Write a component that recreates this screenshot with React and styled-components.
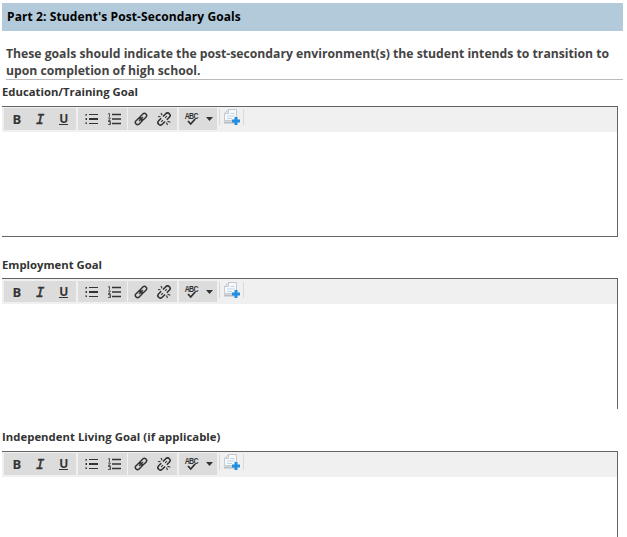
import React from "react";
import styled, { createGlobalStyle } from "styled-components";

const GlobalStyle = createGlobalStyle`
  body {
    margin: 0;
    background-color: #ffffff;
    font-family: "Open Sans", sans-serif;
    overflow: hidden;
  }
`;

const Page = styled.div`
  width: 621px;
  height: 534px;
  padding: 3px 0 0 2px;
  overflow: hidden;
`;

const Header = styled.h1`
  box-sizing: border-box;
  height: 28px;
  margin: 0;
  padding-left: 5px;
  background-color: #b2cad9;
  color: #000000;
  font-size: 12px;
  font-weight: 700;
  letter-spacing: 0.1px;
  line-height: 27px;
`;

const Intro = styled.p`
  box-sizing: border-box;
  height: 49px;
  margin: 0 0 0 4px;
  padding-top: 14px;
  border-bottom: 1px solid #bbbbbb;
  color: #444444;
  font-size: 12.2px;
  font-weight: 700;
  line-height: 17px;
  white-space: nowrap;
`;

const Label = styled.label`
  display: block;
  height: ${(props) => props.$height}px;
  margin-top: ${(props) => props.$gap}px;
  color: #333333;
  font-size: 11.3px;
  font-weight: 700;
  letter-spacing: ${(props) => props.$spacing || 0}px;
  line-height: 16px;
  white-space: nowrap;
`;

const Editor = styled.div`
  box-sizing: border-box;
  width: 616px;
  height: ${(props) => props.$height}px;
  border-top: 1px solid #646464;
  border-right: 1px solid #646464;
  border-bottom: ${(props) => (props.$closed ? "1px solid #646464" : "none")};
`;

const Toolbar = styled.div`
  box-sizing: border-box;
  display: flex;
  align-items: flex-start;
  height: 25px;
  padding: ${(props) => props.$top}px 0 0 2px;
  background-color: #f0f0f0;
`;

const Group = styled.div`
  box-sizing: border-box;
  display: flex;
  width: ${(props) => props.$width}px;
  height: ${(props) => (props.$short ? 21 : 22)}px;
  margin-right: ${(props) => props.$gap || 0}px;
  padding-left: 1px;
  background-color: #dcdcdc;
`;

const Button = styled.button`
  display: flex;
  flex: none;
  align-items: center;
  justify-content: center;
  width: ${(props) => props.$width || 23.5}px;
  height: 22px;
  margin: 0;
  padding: 0;
  border: none;
  background-color: transparent;
  color: #333333;
  font-family: "Open Sans", sans-serif;
  font-size: 13px;
  font-weight: 700;
  line-height: 22px;

  svg {
    display: block;
    flex: none;
  }
`;

const Italic = styled.span`
  font-family: "DejaVu Sans Mono", monospace;
  font-size: 14px;
  font-style: italic;
  font-weight: 400;
  -webkit-text-stroke: 0.4px #333333;
`;

const Underline = styled.span`
  height: 10px;
  border-bottom: 1px solid #333333;
  font-size: 12px;
  font-weight: 700;
  line-height: 9px;
`;

const Spelling = styled.span`
  display: flex;
  flex-direction: column;
  align-items: center;
  width: 14px;
  margin-left: -1px;
`;

const SpellingLetters = styled.span`
  font-family: "Liberation Sans", sans-serif;
  font-size: 7px;
  font-weight: 700;
  letter-spacing: -0.7px;
  line-height: 6px;
  transform: scaleY(1.25);
`;

const AddButton = styled(Button)`
  box-sizing: border-box;
  width: 25px;
  height: 16px;
  margin-top: 1px;
  border-left: 1px solid #dadada;
  border-right: 1px solid #dadada;
`;

const BulletIcon = () => (
  <svg width="13" height="12" fill="#333333" shapeRendering="crispEdges">
    <path d="M1 1h1v1H1zM1 5h1v2H1zM1 10h1v1H1zM4 1h9v1H4zM4 5h9v2H4zM4 10h9v1H4z" />
    <path d="M0 1h2v2H0zM0 5h2v2H0zM0 9h2v2H0z" fillOpacity=".45" />
  </svg>
);

const NumberIcon = () => (
  <svg width="13" height="12" fill="none" stroke="#333333">
    <path d="M4 1.5h9M4 6h9M4 10.5h9" strokeWidth="1.5" />
    <path d="M0 1l1.5-.5V4M0 5h2.5L.5 7.5h2M0 8.5h2.5v3H0M1 10h1.5" strokeWidth=".8" />
  </svg>
);

const LinkIcon = () => (
  <svg width="14" height="14" fill="none" stroke="#333333" strokeWidth="1.5">
    <g transform="rotate(-45 7 7)">
      <rect x="0" y="4.8" width="7.8" height="4.4" rx="2.2" />
      <rect x="6.2" y="4.8" width="7.8" height="4.4" rx="2.2" />
      <path d="M4 7h6" strokeWidth="1.1" />
    </g>
  </svg>
);

const UnlinkIcon = () => (
  <svg width="14" height="14" fill="none" stroke="#333333" strokeWidth="1.6">
    <g transform="rotate(-45 7 7)">
      <path d="M5.5 4.5H2a2.5 2.5 0 0 0 0 5h4M8 4.5H12a2.5 2.5 0 0 1 0 5H8.5" />
      <path d="M3 7h2.5M8.5 7H11" strokeWidth="1" />
    </g>
    <path d="M4 1l1 2.2M1 4.5l2.5.3M9.5 10.5l1 2.5M10.5 9.2l2.8 1" strokeWidth="1.1" />
  </svg>
);

const CheckIcon = () => (
  <svg width="9" height="7" fill="none" stroke="#333333" strokeWidth="1.8">
    <path d="M1 2l2.7 3L8.2 0" />
  </svg>
);

const CaretIcon = () => (
  <svg width="7" height="4" fill="#333333">
    <path d="M0 0h7L3.5 4z" />
  </svg>
);

const AddPageIcon = () => (
  <svg width="16" height="16">
    <path d="M4.5.5h8v11H.5V4.5z" fill="#f7f9fb" stroke="#c2c9d0" />
    <path d="M4.5.5v4h-4z" fill="#e4e9ee" stroke="#c2c9d0" />
    <path d="M6.5 4.5h4M3 7h7.5M3 9.5h5" stroke="#bcd3e8" />
    <path d="M0 12.5h13v2H0z" fill="#b9bec4" />
    <path d="M10.5 8h3v2.5H16v3h-2.5V16h-3v-2.5H8v-3h2.5z" fill="#238ee0" />
  </svg>
);

const GoalEditor = ({ height, closed, top = 1, short }) => (
  <Editor $height={height} $closed={closed}>
    <Toolbar $top={top}>
      <Group $width={72} $gap={2} $short={short}>
        <Button>B</Button>
        <Button>
          <Italic>I</Italic>
        </Button>
        <Button>
          <Underline>U</Underline>
        </Button>
      </Group>
      <Group $width={49} $gap={1} $short={short}>
        <Button $width={24.5}>
          <BulletIcon />
        </Button>
        <Button $width={22.5}>
          <NumberIcon />
        </Button>
      </Group>
      <Group $width={49} $gap={2} $short={short}>
        <Button>
          <LinkIcon />
        </Button>
        <Button>
          <UnlinkIcon />
        </Button>
      </Group>
      <Group $width={38} $gap={2} $short={short}>
        <Button>
          <Spelling>
            <SpellingLetters>ABC</SpellingLetters>
            <CheckIcon />
          </Spelling>
        </Button>
        <Button $width={11}>
          <CaretIcon />
        </Button>
      </Group>
      <AddButton>
        <AddPageIcon />
      </AddButton>
    </Toolbar>
  </Editor>
);

const App = () => {
  return (
    <>
      <GlobalStyle />
      <Page>
        <Header>Part 2: Student's Post-Secondary Goals</Header>
        <Intro>
          These goals should indicate the post-secondary environment(s) the
          student intends to transition to
          <br />
          upon completion of high school.
        </Intro>
        <Label $gap={4} $height={22}>
          Education/Training Goal
        </Label>
        <GoalEditor height={131} closed />
        <Label $gap={20} $height={21}>
          Employment Goal
        </Label>
        <GoalEditor height={131} top={2} short />
        <Label $gap={20} $height={22} $spacing={0.05}>
          Independent Living Goal (if applicable)
        </Label>
        <GoalEditor height={131} />
      </Page>
    </>
  );
};

export default App;
